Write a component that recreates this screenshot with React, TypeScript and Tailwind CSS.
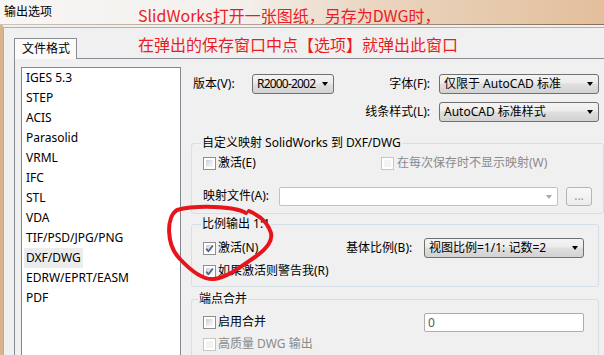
import React from 'react';

const formats = [
  'IGES 5.3',
  'STEP',
  'ACIS',
  'Parasolid',
  'VRML',
  'IFC',
  'STL',
  'VDA',
  'TIF/PSD/JPG/PNG',
  'DXF/DWG',
  'EDRW/EPRT/EASM',
  'PDF',
];

// Win7 style checkbox
function Check({ checked = false, disabled = false }: { checked?: boolean; disabled?: boolean }) {
  return (
    <span
      className={`relative block w-[13px] h-[13px] shrink-0 border bg-white p-[2px] ${
        disabled ? 'border-[#c6c6c6]' : 'border-[#8f8f8f]'
      }`}
    >
      <span
        className={`block w-full h-full ${
          disabled ? 'bg-[#f3f3f3]' : 'bg-[linear-gradient(135deg,#c8ccd2,#e9eaec_55%,#f8f8f8)]'
        }`}
      />
      {checked && (
        <svg className="absolute left-0 top-0" width="11" height="11" viewBox="0 0 11 11">
          <path d="M2.2 5.6 L4.4 8.2 L8.9 2.4" stroke="#4b5f8e" strokeWidth="1.7" fill="none" />
        </svg>
      )}
    </span>
  );
}

function Combo({ text, className }: { text: string; className: string }) {
  return (
    <div
      className={`relative h-[20px] shrink-0 rounded-[3px] border border-[#707070] bg-[linear-gradient(#f4f4f4,#ececec_45%,#dfdfdf_50%,#d2d2d2)] pl-[4px] leading-[18px] whitespace-nowrap ${className}`}
    >
      {text}
      <span className="absolute right-[5px] top-[7px] w-0 h-0 border-l-[3.5px] border-r-[3.5px] border-t-[4px] border-l-transparent border-r-transparent border-t-black" />
    </div>
  );
}

export default function App() {
  return (
    <div className="relative w-[604px] h-[355px] overflow-hidden bg-[#f0f0f0] text-[12px] text-black font-['Noto_Sans','Noto_Sans_CJK_SC',sans-serif]">
      {/* Title bar */}
      <div className="h-[24px] flex items-center pl-[4px] bg-[linear-gradient(to_right,#f7f6f5,#f3f0ec_40%,#ead5c0_62%,#e3bf9b)]">
        输出选项
      </div>
      <div className="h-px bg-[linear-gradient(to_right,#cfc3b8,#8a6f58)]" />

      {/* Body */}
      <div className="flex h-[330px]">
        <div className="w-[3px] bg-[#d8b48e]" />
        <div className="flex-1 mt-[2px] border-l border-t border-[#b0b0b0] pl-[10px] pt-[10px] flex flex-col">
          <div className="flex">
            <div className="relative z-10 -mb-px w-[63px] h-[21px] border border-b-0 border-[#898c95] bg-[#fbfbfb] pl-[7px] leading-[20px]">
              文件格式
            </div>
          </div>
          <div className="flex-1 flex items-start border-l border-t border-[#898c95] pl-[6px] pt-[8px]">
            {/* List */}
            <div className="w-[160px] h-[300px] shrink-0 border border-[#828790] bg-white pl-[2px]">
              {formats.map((f) => (
                <div key={f} className="h-[20px] leading-[20px]">
                  <span className={`inline-block px-[2px] ${f === 'DXF/DWG' ? 'bg-[#ececec]' : ''}`}>{f}</span>
                </div>
              ))}
            </div>

            {/* Options */}
            <div className="ml-[10px] mt-[7px] w-[408px] shrink-0">
              <div className="flex items-center h-[20px]">
                <div className="w-[61px] pl-[2px]">版本(V):</div>
                <Combo text="R2000-2002" className="w-[82px] tracking-[-0.8px]" />
                <div className="w-[96px] text-right">字体(F):</div>
                <Combo text="仅限于 AutoCAD 标准" className="ml-[9px] w-[160px]" />
              </div>
              <div className="mt-[8px] flex items-center justify-end h-[20px]">
                <div>线条样式(L):</div>
                <Combo text="AutoCAD 标准样式" className="ml-[9px] w-[160px]" />
              </div>

              <fieldset className="mt-[13px] border border-[#d5dfe5] rounded-[3px] px-[11px] pb-[7px]">
                <legend className="ml-[-2px] px-[1px] leading-[16px]">自定义映射 SolidWorks 到 DXF/DWG</legend>
                <div className="mt-[4px] h-[16px] flex items-center">
                  <div className="w-[178px] flex items-center gap-[2px]">
                    <Check />
                    <span>激活(E)</span>
                  </div>
                  <div className="flex items-center gap-[3px] text-[#8a8a8a]">
                    <Check disabled />
                    <span>在每次保存时不显示映射(W)</span>
                  </div>
                </div>
                <div className="mt-[15px] h-[20px] flex items-center">
                  <div className="w-[76px]">映射文件(A):</div>
                  <div className="relative w-[279px] h-[19px] rounded-[2px] border border-[#c2c2c2] bg-white">
                    <span className="absolute right-[5px] top-[7px] w-0 h-0 border-l-[3.5px] border-r-[3.5px] border-t-[4px] border-l-transparent border-r-transparent border-t-[#a8a8a8]" />
                  </div>
                  <div className="ml-[8px] w-[26px] h-[19px] rounded-[3px] border border-[#b5b5b5] bg-[linear-gradient(#f8f8f8,#ececec)] text-center leading-[16px] text-[#9a9a9a]">
                    ...
                  </div>
                </div>
              </fieldset>

              <fieldset className="mt-[2px] border border-[#d5dfe5] rounded-[3px] px-[11px] pb-[7px]">
                <legend className="ml-[-2px] px-[1px] leading-[16px]">比例输出 1:1</legend>
                <div className="mt-[6px] h-[20px] flex items-center">
                  <div className="w-[143px] flex items-center gap-[2px]">
                    <Check checked />
                    <span>激活(N)</span>
                  </div>
                  <div className="w-[78px]">基体比例(B):</div>
                  <Combo text="视图比例=1/1: 记数=2" className="w-[160px]" />
                </div>
                <div className="mt-[5px] h-[16px] flex items-center gap-[2px]">
                  <Check checked />
                  <span>如果激活则警告我(R)</span>
                </div>
              </fieldset>

              <fieldset className="mt-[4px] border border-[#d5dfe5] rounded-[3px] px-[11px] pb-[7px]">
                <legend className="ml-[-5px] px-[1px] leading-[16px]">端点合并</legend>
                <div className="mt-[5px] h-[20px] flex items-center">
                  <div className="w-[221px] flex items-center gap-[2px]">
                    <Check />
                    <span>启用合并</span>
                  </div>
                  <div className="w-[160px] h-[19px] rounded-[2px] border border-[#abadb3] bg-white pl-[3px] leading-[17px] text-[#5a5a5a]">
                    0
                  </div>
                </div>
                <div className="mt-[4px] h-[16px] flex items-center gap-[2px] text-[#8a8a8a]">
                  <Check disabled />
                  <span>高质量 DWG 输出</span>
                </div>
              </fieldset>
            </div>
          </div>
        </div>
      </div>

      {/* Red annotation text */}
      <div className="absolute left-[138px] top-[1px] text-[16px] leading-[29px] text-[#ec1c24] font-['Noto_Sans_CJK_SC',sans-serif] whitespace-nowrap">
        <div>SlidWorks打开一张图纸，另存为DWG时，</div>
        <div>在弹出的保存窗口中点【选项】就弹出此窗口</div>
      </div>

      {/* Red hand-drawn circle */}
      <svg className="absolute left-0 top-0 pointer-events-none" width="604" height="355" viewBox="0 0 604 355">
        <path
          d="M246 213 C234 206 196 205 177 210 C166 217 166 245 180 259 C192 272 203 280 214 279 C228 277 242 266 255 257 C265 250 273 242 271 233 C268 222 258 215 249 211"
          stroke="#e8141c"
          strokeWidth="4"
          fill="none"
          strokeLinecap="round"
        />
      </svg>
    </div>
  );
}
